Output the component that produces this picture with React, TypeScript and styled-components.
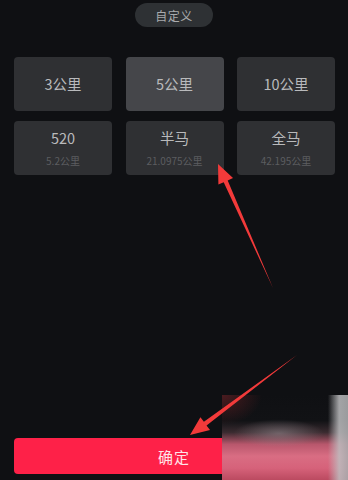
import React from "react";
import styled, { createGlobalStyle } from "styled-components";

const Global = createGlobalStyle`
  html, body { margin: 0; padding: 0; background: #0f1013; }
  body { font-family: "Noto Sans CJK SC", "Noto Sans", sans-serif; }
`;

const Screen = styled.div`
  position: relative;
  width: 348px;
  height: 480px;
  background: #0f1013;
  display: flex;
  flex-direction: column;
  align-items: stretch;
  padding-top: 3px;
  box-sizing: border-box;
  overflow: hidden;
`;

const Pill = styled.div`
  align-self: center;
  width: 78px;
  height: 24px;
  border-radius: 12px;
  background: #2e3134;
  color: #a9abad;
  font-size: 12px;
  display: flex;
  align-items: center;
  justify-content: center;
  letter-spacing: 0.5px;
`;

const Grid = styled.div`
  margin-top: 30px;
  padding: 0 13px 0 14px;
  display: grid;
  grid-template-columns: repeat(3, 1fr);
  column-gap: 13.5px;
  row-gap: 10px;
`;

const Card = styled.div<{ $active?: boolean }>`
  height: 54px;
  border-radius: 4px;
  background: ${(p) => (p.$active ? "#45464a" : "#2f3033")};
  display: flex;
  flex-direction: column;
  align-items: center;
  justify-content: center;
`;

const Main = styled.div`
  color: #b9babc;
  font-size: 14.5px;
  line-height: 18px;
`;

const Sub = styled.div`
  color: #5c5d60;
  font-size: 10px;
  line-height: 12px;
  margin-top: 8px;
`;

const Confirm = styled.button`
  margin: auto 14px 6px 14px;
  height: 36px;
  border: none;
  border-radius: 4px;
  background: #fe2148;
  color: #ffe4e9;
  font-family: "Noto Sans CJK SC", "Noto Sans", sans-serif;
  font-size: 15px;
  letter-spacing: 1px;
  padding: 0;
`;

const Overlay = styled.svg`
  position: absolute;
  left: 0;
  top: 0;
  width: 348px;
  height: 480px;
  pointer-events: none;
`;

const Watermark = styled.div`
  position: absolute;
  left: 222px;
  top: 395px;
  width: 126px;
  height: 85px;
  background:
    linear-gradient(90deg, rgba(190, 190, 192, 0) 84%, rgba(190, 190, 192, 0.85) 93%, rgba(170, 170, 172, 0.9) 100%),
    radial-gradient(ellipse 45px 14px at 45% 45%, rgba(150, 140, 145, 0.55), rgba(150, 140, 145, 0)),
    radial-gradient(ellipse 40px 30px at 0% 0%, rgba(90, 30, 34, 0.8), rgba(90, 30, 34, 0)),
    linear-gradient(180deg, #0f1013 0%, #111215 30%, #3a2b30 44%, #b8576c 58%, #d96d83 72%, #d6627a 86%, #bb4a60 100%);
`;

const items: { main: string; sub?: string; active?: boolean }[] = [
  { main: "3公里" },
  { main: "5公里", active: true },
  { main: "10公里" },
  { main: "520", sub: "5.2公里" },
  { main: "半马", sub: "21.0975公里" },
  { main: "全马", sub: "42.195公里" },
];

function Arrow({ x1, y1, x2, y2 }: { x1: number; y1: number; x2: number; y2: number }) {
  const dx = x2 - x1;
  const dy = y2 - y1;
  const len = Math.hypot(dx, dy);
  const ux = dx / len;
  const uy = dy / len;
  const px = -uy;
  const py = ux;
  const headLen = 19;
  const headW = 8;
  const bx = x2 - ux * headLen;
  const by = y2 - uy * headLen;
  const neckW = 2.2;
  const pts = [
    [x1, y1],
    [bx + px * neckW, by + py * neckW],
    [bx + px * headW, by + py * headW],
    [x2, y2],
    [bx - px * headW, by - py * headW],
    [bx - px * neckW, by - py * neckW],
  ]
    .map((p) => p.join(","))
    .join(" ");
  return <polygon points={pts} fill="#f23a3a" />;
}

export default function App() {
  return (
    <>
      <Global />
      <Screen>
        <Pill>自定义</Pill>
        <Grid>
          {items.map((it) => (
            <Card key={it.main} $active={it.active}>
              <Main>{it.main}</Main>
              {it.sub && <Sub>{it.sub}</Sub>}
            </Card>
          ))}
        </Grid>
        <Confirm>确定</Confirm>
        <Watermark />
        <Overlay viewBox="0 0 348 480">
          <Arrow x1={273} y1={288} x2={218} y2={164} />
          <Arrow x1={297} y1={355} x2={190} y2={435} />
        </Overlay>
      </Screen>
    </>
  );
}
